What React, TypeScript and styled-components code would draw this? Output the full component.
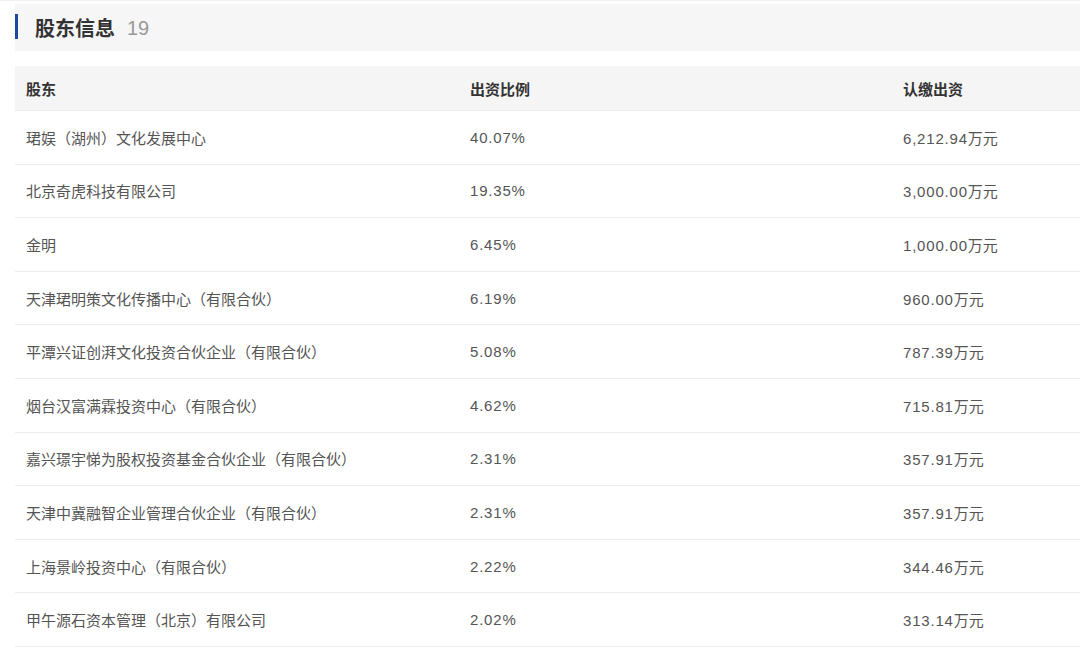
/**
 * @name Shareholders
 * @description 股东信息 table
 */
import React from 'react'
import styled, {createGlobalStyle} from 'styled-components'

const ROWS = [
  {name: '珺娱（湖州）文化发展中心', ratio: '40.07%', amount: '6,212.94'},
  {name: '北京奇虎科技有限公司', ratio: '19.35%', amount: '3,000.00'},
  {name: '金明', ratio: '6.45%', amount: '1,000.00'},
  {name: '天津珺明策文化传播中心（有限合伙）', ratio: '6.19%', amount: '960.00'},
  {name: '平潭兴证创湃文化投资合伙企业（有限合伙）', ratio: '5.08%', amount: '787.39'},
  {name: '烟台汉富满霖投资中心（有限合伙）', ratio: '4.62%', amount: '715.81'},
  {name: '嘉兴璟宇悌为股权投资基金合伙企业（有限合伙）', ratio: '2.31%', amount: '357.91'},
  {name: '天津中冀融智企业管理合伙企业（有限合伙）', ratio: '2.31%', amount: '357.91'},
  {name: '上海景岭投资中心（有限合伙）', ratio: '2.22%', amount: '344.46'},
  {name: '甲午源石资本管理（北京）有限公司', ratio: '2.02%', amount: '313.14'},
]

export default function App() {
  return (
    <>
      <Global />
      <Page>
        {/* section header */}
        <SectionHead>
          <Title>股东信息</Title>
          <Count>19</Count>
        </SectionHead>
        {/* table */}
        <Table>
          <HeadRow>
            <span>股东</span>
            <span>出资比例</span>
            <span>认缴出资</span>
          </HeadRow>
          {ROWS.map((item, index) => (
            <Row key={`${item.name}_${index}`}>
              <span>{item.name}</span>
              <Num>{item.ratio}</Num>
              <span>
                <Num>{item.amount}</Num>万元
              </span>
            </Row>
          ))}
        </Table>
      </Page>
    </>
  )
}
// * --------------------------------------------------*
const Global = createGlobalStyle`
  html, body {
    margin: 0;
    padding: 0;
    background: #fff;
  }
  body {
    font-family: "Liberation Sans", "Noto Sans CJK SC", sans-serif;
  }
`
const Page = styled.div`
  width: 1080px;
  height: 661px;
  overflow: hidden;
  padding-top: 3px;
  box-sizing: border-box;
  border-top: 1px solid #f0f0f0;
`
const SectionHead = styled.div`
  position: relative;
  margin-left: 15px;
  height: 47px;
  background: #f6f6f6;
  display: flex;
  align-items: center;
  padding-left: 20px;
  gap: 12px;
  &::before {
    content: '';
    position: absolute;
    left: 0;
    top: 10px;
    width: 3px;
    height: 25px;
    background: #1b4a9c;
  }
`
const Title = styled.span`
  font-family: "Noto Sans CJK SC", sans-serif;
  font-size: 20px;
  font-weight: 700;
  color: #333;
`
const Count = styled.span`
  font-size: 20px;
  color: #999;
  padding-top: 2px;
`
const Table = styled.div`
  margin: 15px 0 0 15px;
`
const HeadRow = styled.div`
  display: grid;
  grid-template-columns: 444px 433px 1fr;
  align-items: center;
  height: 44px;
  padding-left: 11px;
  background: #f5f5f5;
  border-bottom: 1px solid #ececec;
  font-family: "Noto Sans CJK SC", sans-serif;
  font-size: 15px;
  font-weight: 700;
  color: #333;
`
const Row = styled.div`
  display: grid;
  grid-template-columns: 444px 433px 1fr;
  align-items: center;
  height: 52.6px;
  padding-left: 11px;
  border-bottom: 1px solid #ececec;
  font-family: "Liberation Sans", "Noto Sans CJK SC", sans-serif;
  font-size: 15px;
  color: #555;
`
const Num = styled.span`
  letter-spacing: 0.8px;
`
